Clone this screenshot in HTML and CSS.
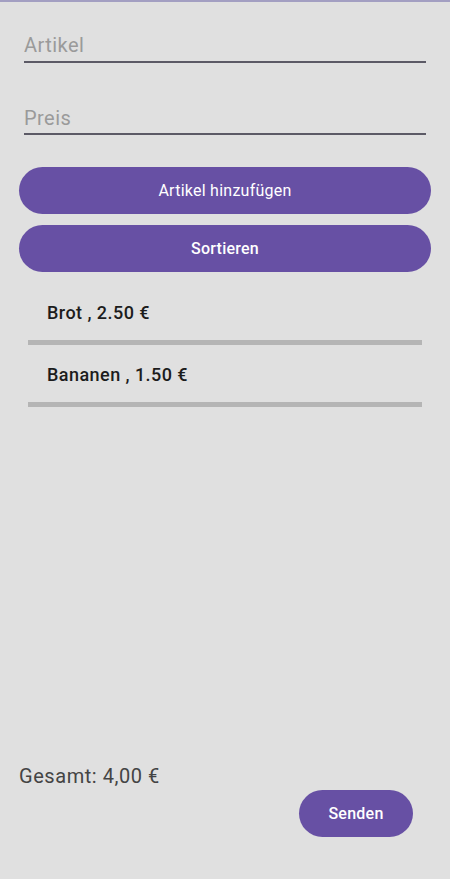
FILE: index.html
```html
<!DOCTYPE html>
<html lang="de">
<head>
<meta charset="utf-8">
<title>Einkaufsliste</title>
<link rel="stylesheet" href="styles.css">
</head>
<body>
<div class="app">
  <div class="fields">
    <input class="field field-first" type="text" placeholder="Artikel">
    <input class="field field-second" type="text" placeholder="Preis">
  </div>
  <div class="actions">
    <button class="btn btn-add" type="button">Artikel hinzufügen</button>
    <button class="btn btn-sort" type="button">Sortieren</button>
  </div>
  <ul class="list">
    <li class="item"><span class="item-text">Brot , 2.50 €</span></li>
    <li class="item"><span class="item-text">Bananen , 1.50 €</span></li>
  </ul>
  <div class="footer">
    <div class="total">Gesamt: 4,00 €</div>
    <button class="btn btn-send" type="button">Senden</button>
  </div>
</div>
</body>
</html>
```

FILE: styles.css
```css
* { box-sizing: border-box; }

html, body {
  margin: 0;
  padding: 0;
  background: #e0e0e0;
}

body {
  font-family: Roboto, "Noto Sans", "Liberation Sans", sans-serif;
}

.app {
  height: 879px;
  display: flex;
  flex-direction: column;
  border-top: 2px solid #a39fc2;
  background: #e0e0e0;
}

.fields {
  display: flex;
  flex-direction: column;
  padding: 0 24px;
}

.field {
  display: block;
  width: 100%;
  height: 30px;
  margin: 0;
  padding: 0 0 4px 0;
  border: none;
  border-bottom: 2px solid #5c5a66;
  background: transparent;
  font-family: Roboto, "Noto Sans", "Liberation Sans", sans-serif;
  font-size: 20px;
  line-height: 24px;
  letter-spacing: 0.45px;
  color: #1d1b20;
  outline: none;
}

.field::placeholder {
  color: #9a9a9a;
  opacity: 1;
}

.field-first { margin-top: 31px; }
.field-second { margin-top: 43px; padding-bottom: 3px; height: 29px; }

.actions {
  display: flex;
  flex-direction: column;
  gap: 11px;
  padding: 0 19px;
  margin-top: 32px;
}

.btn {
  display: flex;
  align-items: center;
  justify-content: center;
  height: 47px;
  border: none;
  border-radius: 24px;
  background: #6750a4;
  color: #ffffff;
  font-family: Roboto, "Noto Sans", "Liberation Sans", sans-serif;
  font-size: 16px;
  letter-spacing: 0.25px;
  padding: 0;
  cursor: pointer;
}

.btn-add { font-weight: 400; width: 100%; }
.btn-sort { font-weight: 500; width: 100%; }

.list {
  list-style: none;
  margin: 11px 28px 0 28px;
  padding: 0;
}

.item {
  padding: 18px 0 15px 19px;
  border-bottom: 5px solid #b5b5b5;
}

.item-text {
  display: block;
  font-size: 18px;
  line-height: 24px;
  font-weight: 500;
  letter-spacing: 0.45px;
  color: #1c1c1c;
}

.footer {
  margin-top: auto;
  display: flex;
  flex-direction: column;
  padding: 0 19px 42px 19px;
}

.total {
  font-size: 20px;
  line-height: 24px;
  letter-spacing: 0.55px;
  color: #444444;
}

.btn-send {
  align-self: flex-end;
  width: 114px;
  margin-top: 2px;
  margin-right: 18px;
  font-weight: 500;
}
```
